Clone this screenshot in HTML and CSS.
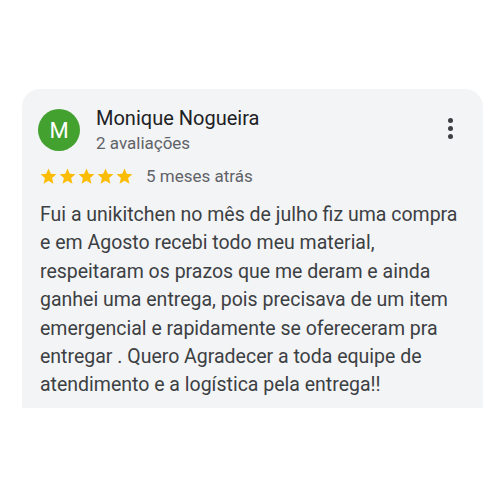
FILE: index.html
```html
<!DOCTYPE html>
<html lang="pt-BR">
<head>
    <meta charset="UTF-8">
    <meta name="viewport" content="width=device-width, initial-scale=1.0">
    <title>Avaliação</title>
    <link rel="stylesheet" href="styles.css">
</head>
<body>

<div class="review">
    <div class="review-head">
        <div class="avatar">M</div>
        <div class="author">
            <div class="author-name">Monique Nogueira</div>
            <div class="author-count">2 avaliações</div>
        </div>
        <div class="menu">
            <span></span><span></span><span></span>
        </div>
    </div>

    <div class="review-meta">
        <div class="stars">
            <svg viewBox="0 0 24 24"><path d="M12 17.27L18.18 21l-1.64-7.03L22 9.24l-7.19-.61L12 2 9.19 8.63 2 9.24l5.46 4.73L5.82 21z"/></svg>
            <svg viewBox="0 0 24 24"><path d="M12 17.27L18.18 21l-1.64-7.03L22 9.24l-7.19-.61L12 2 9.19 8.63 2 9.24l5.46 4.73L5.82 21z"/></svg>
            <svg viewBox="0 0 24 24"><path d="M12 17.27L18.18 21l-1.64-7.03L22 9.24l-7.19-.61L12 2 9.19 8.63 2 9.24l5.46 4.73L5.82 21z"/></svg>
            <svg viewBox="0 0 24 24"><path d="M12 17.27L18.18 21l-1.64-7.03L22 9.24l-7.19-.61L12 2 9.19 8.63 2 9.24l5.46 4.73L5.82 21z"/></svg>
            <svg viewBox="0 0 24 24"><path d="M12 17.27L18.18 21l-1.64-7.03L22 9.24l-7.19-.61L12 2 9.19 8.63 2 9.24l5.46 4.73L5.82 21z"/></svg>
        </div>
        <span class="review-date">5 meses atrás</span>
    </div>

    <p class="review-text">Fui a unikitchen no mês de julho fiz uma compra e em Agosto recebi todo meu material, respeitaram os prazos que me deram e ainda ganhei uma entrega, pois precisava de um item emergencial e rapidamente se ofereceram pra entregar . Quero Agradecer a toda equipe de atendimento e a logística pela entrega!!</p>
</div>

</body>
</html>
```

FILE: styles.css
```css
body {
    font-family: Roboto, "Noto Sans", Arial, sans-serif;
    background-color: #fff;
    margin: 0;
    padding: 89px 0 0 22px;
}

.review {
    width: 461px;
    height: 319px;
    box-sizing: border-box;
    background-color: #f3f4f6;
    border-radius: 18px 18px 0 0;
    padding: 20px 30px 0 16px;
}

.review-head {
    display: flex;
    align-items: flex-start;
}

.avatar {
    width: 42px;
    height: 42px;
    border-radius: 50%;
    background-color: #43a12f;
    color: #fff;
    font-size: 22px;
    display: flex;
    align-items: center;
    justify-content: center;
    flex-shrink: 0;
}

.author {
    flex: 1;
    margin-left: 16px;
    margin-top: -4px;
}

.author-name {
    font-size: 20px;
    color: #202124;
    line-height: 27px;
}

.author-count {
    font-size: 17px;
    color: #5f6368;
    line-height: 23px;
}

.menu {
    display: flex;
    flex-direction: column;
    gap: 3px;
    margin-top: 9px;
}

.menu span {
    display: block;
    width: 5px;
    height: 5px;
    border-radius: 50%;
    background-color: #3c4043;
}

.review-meta {
    display: flex;
    align-items: center;
    margin-top: 11px;
    padding-left: 1px;
}

.stars {
    display: flex;
}

.stars svg {
    width: 19px;
    height: 19px;
    fill: #fbbc04;
}

.review-date {
    font-size: 17px;
    color: #5f6368;
    margin-left: 12px;
}

.review-text {
    margin: 15px -14px 0 2px;
    font-size: 19.5px;
    line-height: 28.4px;
    color: #3c4043;
}
```
